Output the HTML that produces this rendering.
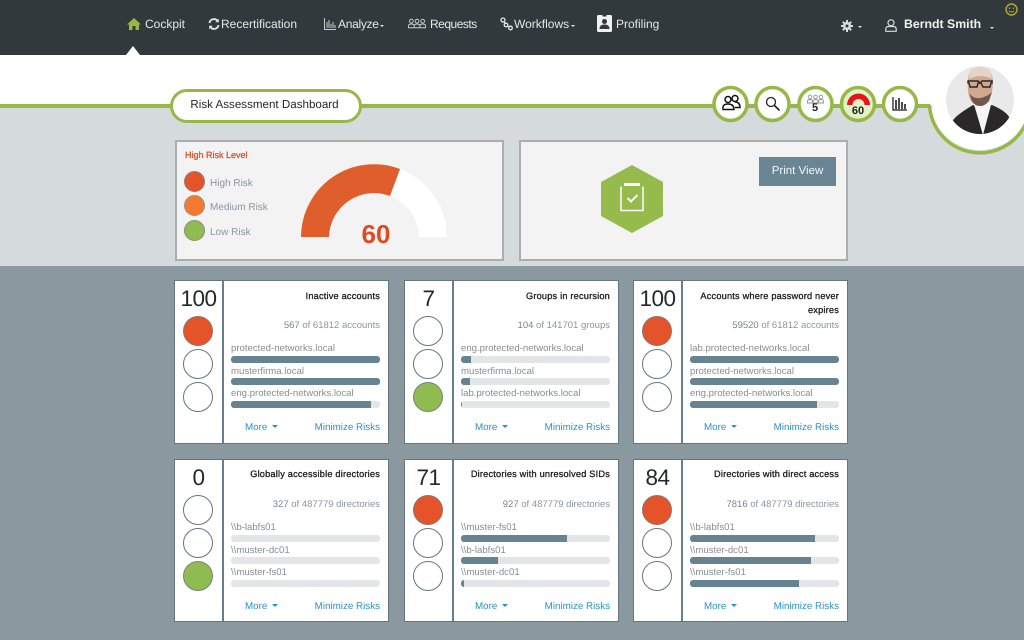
<!DOCTYPE html>
<html><head><meta charset="utf-8"><style>
*{box-sizing:border-box}
html,body{margin:0;padding:0}
body{width:1024px;height:640px;position:relative;overflow:hidden;background:#8a989f;font-family:"Liberation Sans",sans-serif;text-rendering:geometricPrecision}
.a{position:absolute}
.nav{position:absolute;top:15px;line-height:18px;font-size:12px;color:#e4e7e7;white-space:nowrap}
.card{position:absolute;width:215px;height:163px;background:#fff;border:1px solid #66767f}
.r1{height:164px}
.card .div{position:absolute;left:47px;top:0;width:2px;height:100%;background:#667f8c}
.num{position:absolute;left:0;width:47px;top:4px;text-align:center;font-size:22.500px;letter-spacing:-.5px;line-height:28px;color:#25282a}
.c{position:absolute;left:8px;width:30px;height:30px;border-radius:50%;border:1.500px solid #66767f;background:#fff}
.c1{top:35px}.c2{top:68px}.c3{top:101px}
.r{background:#e5532b;border-color:#8a7770}
.g{background:#8fbb50;border-color:#72877a}
.t{position:absolute;right:8px;top:7px;width:150px;text-align:right;font-size:9.200px;line-height:14px;font-weight:400;color:#1c1c1c;-webkit-text-stroke:.3px #1c1c1c;letter-spacing:.2px}
.r1 .t{top:8px}
.s{position:absolute;right:8px;top:38px;font-size:9.500px;line-height:14px;color:#8a969e;white-space:nowrap}
.s b{font-weight:400;color:#75858f}
.l{position:absolute;left:56px;font-size:9.600px;line-height:13px;color:#868e93;white-space:nowrap}
.l1{top:61px}.l2{top:84px}.l3{top:106px}
.b{position:absolute;left:56px;width:149px;height:7px;background:#e4e5e6;border-radius:3px;overflow:hidden}
.b1{top:75px}.b2{top:97px}.b3{top:120px}
.b i{display:block;height:7px;background:#678290}
.m{position:absolute;left:70px;top:140px;font-size:9.800px;line-height:14px;color:#2a93c4}
.m:after{content:"";display:inline-block;margin-left:5px;vertical-align:2px;border:3px solid transparent;border-top-color:#2a93c4;border-bottom:0}
.x{position:absolute;right:8px;top:140px;font-size:9.800px;line-height:14px;color:#2a93c4;white-space:nowrap}
</style></head><body>
<div class="a" style="left:0;top:0;width:1024px;height:55px;background:#32393c"></div>
<div class="a" style="left:0;top:55px;width:1024px;height:50px;background:#fff"></div>
<div class="a" style="left:0;top:108px;width:1024px;height:158px;background:#d5dadc"></div>
<div class="a" style="left:0;top:104px;width:1024px;height:4px;background:#97b846"></div>
<div class="a" style="left:126px;top:46px;width:0;height:0;border:7px solid transparent;border-top:0;border-bottom:9px solid #fff"></div>

<svg class="a" style="left:127px;top:18px" width="14" height="12" viewBox="0 0 14 12"><path d="M7 0L0 6.500h2V12h3.500V8h3v4H12V6.500h2z" fill="#97b846"/></svg>
<div class="nav" style="left:145px">Cockpit</div>
<svg class="a" style="left:208px;top:18px" width="12" height="12" viewBox="0 0 12 12" fill="none" stroke="#e4e7e7" stroke-width="1.800"><path d="M1.500 5A4.500 4.500 0 0 1 9.500 2.800"/><path d="M10.500 7A4.500 4.500 0 0 1 2.500 9.200"/><path d="M10.800 .8v3.500H7.300z" fill="#e4e7e7" stroke="none"/><path d="M1.200 11.200V7.700h3.500z" fill="#e4e7e7" stroke="none"/></svg>
<div class="nav" style="left:221px">Recertification</div>
<svg class="a" style="left:324px;top:18px" width="12" height="12" viewBox="0 0 12 12" fill="none" stroke="#c9cdcd" stroke-width="1"><path d="M.5 0v11.500H12M3 4v6M5 2v8M7 6v4M9 4v6M11 7v3"/></svg>
<div class="nav" style="left:338px;letter-spacing:-.3px">Analyze</div>
<div class="a" style="left:380px;top:25px;border:2.500px solid transparent;border-top-color:#e4e7e7;border-bottom:0"></div>
<svg class="a" style="left:408px;top:18px" width="18" height="11" viewBox="0 0 19 11" fill="none" stroke="#c9cdcd" stroke-width="1"><circle cx="3.500" cy="3" r="2"/><circle cx="9.500" cy="3" r="2"/><circle cx="15.500" cy="3" r="2"/><path d="M.5 10V8q0-2 3-2t3 2v2zM6.500 10V8q0-2 3-2t3 2v2zM12.500 10V8q0-2 3-2t3 2v2z"/></svg>
<div class="nav" style="left:430px;letter-spacing:-.5px">Requests</div>
<svg class="a" style="left:500px;top:17px" width="13" height="14" viewBox="0 0 13 14" fill="none" stroke="#e4e7e7" stroke-width="1.300"><circle cx="3" cy="3" r="2"/><circle cx="6" cy="8" r="1.800"/><circle cx="10.500" cy="11" r="1.800"/><path d="M4 5l1 1.500M7.500 9l1.500 1"/></svg>
<div class="nav" style="left:514px">Workflows</div>
<div class="a" style="left:571px;top:25px;border:2.500px solid transparent;border-top-color:#e4e7e7;border-bottom:0"></div>
<svg class="a" style="left:597px;top:15px" width="15" height="17" viewBox="0 0 15 17"><rect width="15" height="17" rx="1.500" fill="#f0f1f1"/><circle cx="7.500" cy="6.500" r="2.500" fill="#32393c"/><path d="M2.500 14q0-4.500 5-4.500t5 4.500z" fill="#32393c"/><rect x="5.500" y="0" width="4" height="1.500" fill="#32393c"/></svg>
<div class="nav" style="left:616px">Profiling</div>
<svg class="a" style="left:841px;top:20px" width="12" height="12" viewBox="0 0 12 12"><path d="M6 0v12M0 6h12M1.800 1.800l8.400 8.400M1.800 10.200l8.400-8.400" stroke="#d8dcdc" stroke-width="2"/><circle cx="6" cy="6" r="4" fill="#d8dcdc"/><circle cx="6" cy="6" r="1.500" fill="#32393c"/></svg>
<div class="a" style="left:858px;top:26px;border:2.500px solid transparent;border-top-color:#e4e7e7;border-bottom:0"></div>
<svg class="a" style="left:885px;top:19px" width="12" height="13" viewBox="0 0 12 13" fill="none" stroke="#d8dcdc" stroke-width="1.200"><circle cx="6" cy="3.800" r="3"/><path d="M.8 12.300V10q0-2.500 3-2.500h4.400q3 0 3 2.500v2.300z"/></svg>
<div class="nav" style="left:904px;top:15px;font-size:12.300px;font-weight:700;color:#f0f1f1">Berndt Smith</div>
<div class="a" style="left:990px;top:27px;border:2.500px solid transparent;border-top-color:#e4e7e7;border-bottom:0"></div>
<svg class="a" style="left:1005px;top:3px" width="13" height="13" viewBox="0 0 13 13" fill="none" stroke="#b3a92f" stroke-width="1.400"><circle cx="6.500" cy="6.500" r="5.500"/><path d="M4 8q2.500 2 5 0" stroke-width="1"/><path d="M4.500 4.500v1.500M8.500 4.500v1.500" stroke-width="1.200"/></svg>

<!-- title pill -->
<div class="a" style="left:170px;top:89px;width:192px;height:34px;background:#fff;border:3.500px solid #97b846;border-radius:17px;padding-right:3px;text-align:center;font-size:11.600px;line-height:26px;color:#262626">Risk Assessment Dashboard</div>

<!-- avatar arc -->
<svg class="a" style="left:900px;top:55px" width="124" height="110" viewBox="0 0 124 110">
<circle cx="80" cy="45" r="50" fill="#fff"/>
<path d="M29.500 50A50.500 50.500 0 0 0 126 68" fill="none" stroke="#97b846" stroke-width="3.500"/>
<defs><clipPath id="av"><circle cx="80" cy="45" r="34"/></clipPath></defs>
<g clip-path="url(#av)">
<rect x="46" y="11" width="68" height="68" fill="#e9e9ea"/>
<path d="M50 80q0-12 4-16 4-5 19-14l8 4 11-4q16 7 18 14 2 6 2 16z" fill="#2a2829"/>
<path d="M73 46l10 34 9-34-9 4z" fill="#f4f6f6"/>
<path d="M68 26q0-13 12-13t13 13q0 13-5 20-4 5-8 5-5 0-9-5-4-7-3-20z" fill="#d0a88f"/>
<path d="M70 15q10-6 20 0l2 9q-11-6-23 0z" fill="#e3d3c8"/>
<path d="M69 38q4 6 11 5t12-6l-3 9q-4 5-9 5t-8-5z" fill="#6f574b"/>
<path d="M68 26h10l2 2 2-2h10v2h-1l-1 4h-7l-2-4h-3l-1 4h-7l-1-4h-1z" fill="none" stroke="#2c2626" stroke-width="1.400"/>
</g>
</svg>

<!-- icon circles -->
<svg class="a" style="left:708px;top:82px" width="214" height="44" viewBox="0 0 214 44">
<g fill="#fff" stroke="#97b846" stroke-width="3.500">
<circle cx="22.500" cy="22" r="16.500"/><circle cx="64.500" cy="22" r="16.500"/><circle cx="107.500" cy="22" r="16.500"/><circle cx="150" cy="22" r="16.500" fill="#dff2c8"/><circle cx="192" cy="22" r="16.500"/>
</g>
<g fill="none" stroke="#111" stroke-width="1.500"><circle cx="20" cy="17.500" r="3"/><circle cx="27" cy="16.500" r="3"/><path d="M15 27.500q-1-5.500 5-5.500t6 5.500z" fill="#fff"/><path d="M27 20q5 0 5 5.500h-5"/></g>
<g fill="none" stroke="#222" stroke-width="1.300"><circle cx="63" cy="20" r="4.500"/><path d="M66.500 23.500l5 5" stroke-width="1.600"/></g>
<g fill="none" stroke="#8d9499" stroke-width=".9"><circle cx="102" cy="15" r="1.800"/><circle cx="107.500" cy="15" r="1.800"/><circle cx="113" cy="15" r="1.800"/><path d="M99.500 21v-1.500q0-2 2.500-2t2.500 2v1.500zM105 21v-1.500q0-2 2.500-2t2.500 2v1.500zM110.500 21v-1.500q0-2 2.500-2t2.500 2v1.500z"/></g>
<path d="M139 23a11.500 11.500 0 0 1 23 0h-5.500a6 6 0 0 0-12 0z" fill="#e8141a"/>
<g fill="none" stroke="#111" stroke-width="1.200"><path d="M185 15v13h14"/><path d="M188 18v9M191 16v11M194 20v7M197 22v5" stroke-width="1.500"/></g>
</svg>
<div class="a" style="left:805px;top:102px;width:20px;text-align:center;font-size:11px;font-weight:700;line-height:13px;color:#222">5</div>
<div class="a" style="left:848px;top:105px;width:20px;text-align:center;font-size:11px;font-weight:700;line-height:13px;color:#222">60</div>
<!-- top panels -->
<div class="a" style="left:175px;top:140px;width:329px;height:121px;background:#f3f3f4;border:2px solid #aaaeb0"></div>
<div class="a" style="left:519px;top:140px;width:329px;height:121px;background:#f3f3f4;border:2px solid #aaaeb0"></div>
<div class="a" style="left:185px;top:149px;font-size:9px;line-height:13px;color:#d9512a;-webkit-text-stroke:.3px #d9512a;white-space:nowrap">High Risk Level</div>
<div class="a" style="left:184px;top:171px;width:21px;height:21px;border-radius:50%;background:#e5532b;border:1px solid #8f8078"></div>
<div class="a" style="left:184px;top:195px;width:21px;height:21px;border-radius:50%;background:#f47a32;border:1px solid #a39080"></div>
<div class="a" style="left:184px;top:220px;width:21px;height:21px;border-radius:50%;background:#8fbb50;border:1px solid #84917a"></div>
<div class="a" style="left:210px;top:177px;font-size:10px;line-height:13px;color:#8a95a0">High Risk</div>
<div class="a" style="left:210px;top:201px;font-size:10px;line-height:13px;color:#8a95a0">Medium Risk</div>
<div class="a" style="left:210px;top:226px;font-size:10px;line-height:13px;color:#8a95a0">Low Risk</div>
<svg class="a" style="left:295px;top:160px" width="160" height="80" viewBox="295 160 160 80">
<path d="M400 169A73 73 0 0 1 447 237H419A45 45 0 0 0 390 196z" fill="#fff"/>
<path d="M301 237A73 73 0 0 1 400 169L390 196A45 45 0 0 0 329 237z" fill="#e05e2b"/>
</svg>
<div class="a" style="left:346px;top:219px;width:60px;text-align:center;font-size:26px;font-weight:700;line-height:30px;color:#dc4e22">60</div>
<svg class="a" style="left:600px;top:164px" width="64" height="70" viewBox="600 164 64 70">
<path d="M632 165L663 182V216L632 233L601 216V182z" fill="#97ba4d"/>
<path d="M621 186.500V210.500H643V186.500" fill="none" stroke="#f6f8f2" stroke-width="1.600"/>
<rect x="624" y="183" width="16" height="3" fill="#f6f8f2"/>
<path d="M627.500 198l3.500 3.500 6.500-6.500" fill="none" stroke="#f6f8f2" stroke-width="2"/>
</svg>
<div class="a" style="left:759px;top:157px;width:77px;height:29px;background:#6a8593;color:#f4f6f7;font-size:11.500px;line-height:28px;text-align:center">Print View</div>

<!-- cards row 1 -->
<div class="card r1" style="left:174px;top:280px"><div class="div"></div><div class="num">100</div><div class="c c1 r"></div><div class="c c2"></div><div class="c c3"></div>
<div class="t">Inactive accounts</div><div class="s"><b>567</b> of 61812 accounts</div>
<div class="l l1">protected-networks.local</div><div class="b b1"><i style="width:100%"></i></div>
<div class="l l2">musterfirma.local</div><div class="b b2"><i style="width:100%"></i></div>
<div class="l l3">eng.protected-networks.local</div><div class="b b3"><i style="width:94%"></i></div>
<div class="m">More</div><div class="x">Minimize Risks</div></div>

<div class="card r1" style="left:404px;top:280px"><div class="div"></div><div class="num">7</div><div class="c c1"></div><div class="c c2"></div><div class="c c3 g"></div>
<div class="t">Groups in recursion</div><div class="s"><b>104</b> of 141701 groups</div>
<div class="l l1">eng.protected-networks.local</div><div class="b b1"><i style="width:7%"></i></div>
<div class="l l2">musterfirma.local</div><div class="b b2"><i style="width:6%"></i></div>
<div class="l l3">lab.protected-networks.local</div><div class="b b3"><i style="width:1%"></i></div>
<div class="m">More</div><div class="x">Minimize Risks</div></div>

<div class="card r1" style="left:633px;top:280px"><div class="div"></div><div class="num">100</div><div class="c c1 r"></div><div class="c c2"></div><div class="c c3"></div>
<div class="t">Accounts where password never expires</div><div class="s"><b>59520</b> of 61812 accounts</div>
<div class="l l1">lab.protected-networks.local</div><div class="b b1"><i style="width:100%"></i></div>
<div class="l l2">protected-networks.local</div><div class="b b2"><i style="width:100%"></i></div>
<div class="l l3">eng.protected-networks.local</div><div class="b b3"><i style="width:85%"></i></div>
<div class="m">More</div><div class="x">Minimize Risks</div></div>

<!-- cards row 2 -->
<div class="card" style="left:174px;top:459px"><div class="div"></div><div class="num">0</div><div class="c c1"></div><div class="c c2"></div><div class="c c3 g"></div>
<div class="t">Globally accessible directories</div><div class="s"><b>327</b> of 487779 directories</div>
<div class="l l1">\\b-labfs01</div><div class="b b1"></div>
<div class="l l2">\\muster-dc01</div><div class="b b2"></div>
<div class="l l3">\\muster-fs01</div><div class="b b3"></div>
<div class="m">More</div><div class="x">Minimize Risks</div></div>

<div class="card" style="left:404px;top:459px"><div class="div"></div><div class="num">71</div><div class="c c1 r"></div><div class="c c2"></div><div class="c c3"></div>
<div class="t">Directories with unresolved SIDs</div><div class="s"><b>927</b> of 487779 directories</div>
<div class="l l1">\\muster-fs01</div><div class="b b1"><i style="width:71%"></i></div>
<div class="l l2">\\b-labfs01</div><div class="b b2"><i style="width:25%"></i></div>
<div class="l l3">\\muster-dc01</div><div class="b b3"><i style="width:2%"></i></div>
<div class="m">More</div><div class="x">Minimize Risks</div></div>

<div class="card" style="left:633px;top:459px"><div class="div"></div><div class="num">84</div><div class="c c1 r"></div><div class="c c2"></div><div class="c c3"></div>
<div class="t">Directories with direct access</div><div class="s"><b>7816</b> of 487779 directories</div>
<div class="l l1">\\b-labfs01</div><div class="b b1"><i style="width:84%"></i></div>
<div class="l l2">\\muster-dc01</div><div class="b b2"><i style="width:81%"></i></div>
<div class="l l3">\\muster-fs01</div><div class="b b3"><i style="width:73%"></i></div>
<div class="m">More</div><div class="x">Minimize Risks</div></div>
</body></html>
